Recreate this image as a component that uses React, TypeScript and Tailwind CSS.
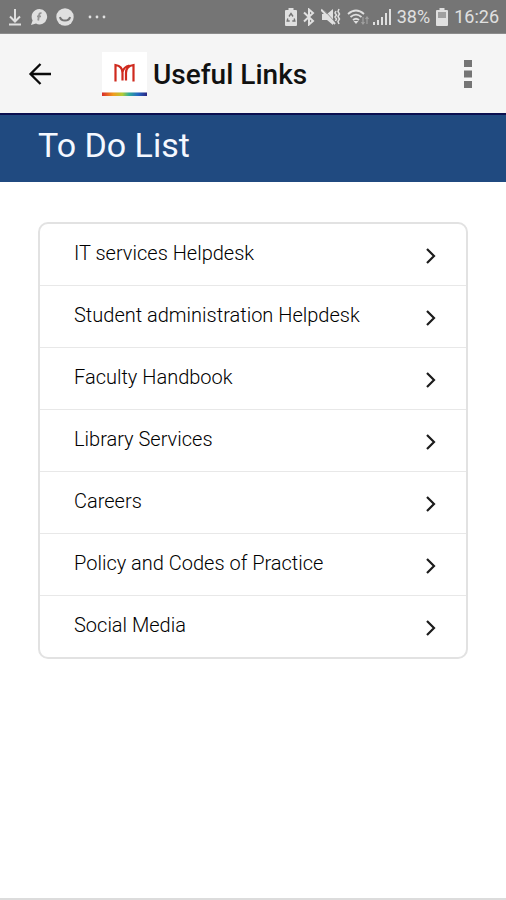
const links = [
  "IT services Helpdesk",
  "Student administration Helpdesk",
  "Faculty Handbook",
  "Library Services",
  "Careers",
  "Policy and Codes of Practice",
  "Social Media",
];

function StatusBar() {
  return (
    <div className="flex h-[34px] items-center justify-between border-b border-[#8c8c8c] bg-[#757575] pl-2 pr-[7px] text-[#e0e0e0]">
      <div className="flex items-center gap-2">
        <svg className="h-[18px] w-[14px]" viewBox="0 0 14 18" fill="none" stroke="currentColor" strokeWidth="2">
          <path d="M7 1v12M2 8.5l5 5 5-5M1 16.5h12" />
        </svg>
        <svg className="h-[18px] w-[18px]" viewBox="0 0 18 18">
          <path fill="currentColor" d="M9.5 1A7.7 7.7 0 1 1 6 15.6L1 17l1.600-4.400A7.800 7.800 0 0 1 9.500 1z" />
          <path fill="none" stroke="#959595" strokeWidth="1.800" d="M11.500 5.200c-2-.4-2.300.8-2.500 2.300l-.8 5M7 8.300h4" />
        </svg>
        <svg className="h-[18px] w-[18px]" viewBox="0 0 18 18">
          <circle cx="9" cy="9" r="8.700" fill="currentColor" />
          <path fill="none" stroke="#757575" strokeWidth="2" d="M4 9c1 4.800 9 4.800 10 0" />
        </svg>
        <svg className="ml-[6px] h-1 w-[18px]" viewBox="0 0 18 4" fill="currentColor">
          <circle cx="2" cy="2" r="1.400" />
          <circle cx="9" cy="2" r="1.400" />
          <circle cx="16" cy="2" r="1.400" />
        </svg>
      </div>
      <div className="flex items-center gap-[6px]">
        <svg className="h-[18px] w-3" viewBox="0 0 12 18">
          <path fill="currentColor" d="M3.500 2V0h5v2H11q1 0 1 1v14q0 1-1 1H1q-1 0-1-1V3q0-1 1-1z" />
          <path fill="none" stroke="#757575" strokeWidth="1.400" d="M4 8.500l2-3 2 3M2.800 10.500l-.6 2.500h2.500M9.200 10.500l.6 2.500H7.300" />
        </svg>
        <svg className="h-[18px] w-3" viewBox="0 0 12 18" fill="none" stroke="currentColor" strokeWidth="2">
          <path d="M1 4.500l9 8.500-4 3.500v-15l4 3.500-9 8.500" />
        </svg>
        <svg className="h-[18px] w-[20px]" viewBox="0 0 20 18">
          <path fill="currentColor" d="M1 6h5l6-5v16l-6-5H1z" />
          <path fill="none" stroke="#8a8a8a" strokeWidth="1" d="M3.500 2.500l10 11" />
          <path fill="none" stroke="currentColor" strokeWidth="2" d="M0 1.500L14 16" />
          <path fill="none" stroke="currentColor" strokeWidth="1.500" d="M15 3l-1 2 1.500 2L14 9l1.500 2-1 2M18 1l-1 2.500L18.500 6 17 8.500l1.500 2.500-1.500 2.500 1 2.500" />
        </svg>
        <div className="flex items-center gap-1">
          <svg className="h-[18px] w-[22px]" viewBox="0 0 22 18" fill="none" stroke="currentColor" strokeWidth="1.800">
            <path d="M1 6q8-7 16 0M3.500 9q5.500-4.800 11 0M6 12q3-2.600 6 0" />
            <path fill="currentColor" stroke="none" d="M6.500 13h5L9 16z" />
            <path opacity=".4" d="M16 9v7M14.500 14l1.500 2 1.500-2M20 16V9M18.500 11L20 9l1.500 2" strokeWidth="1.200" />
          </svg>
          <svg className="h-[18px] w-[18px]" viewBox="0 0 18 18" fill="currentColor">
            <path d="M0 14h2v3H0zM4 12h2v5H4zM8 9h2v8H8zM12 5h2v12h-2zM16 1h2v16h-2z" />
          </svg>
        </div>
        <span className="text-lg leading-none">38%</span>
        <svg className="h-[18px] w-3" viewBox="0 0 12 18">
          <path fill="currentColor" d="M3.500 2V0h5v2H11q1 0 1 1v14q0 1-1 1H1q-1 0-1-1V3q0-1 1-1z" />
          <path fill="#a0a0a0" d="M2 4h8v6H2z" />
        </svg>
        <span className="text-lg leading-none">16:26</span>
      </div>
    </div>
  );
}

function Logo() {
  return (
    <svg className="h-11 w-[45px]" viewBox="0 0 45 44">
      <defs>
        <linearGradient id="rainbow">
          <stop offset="0" stopColor="#d92b2b" />
          <stop offset=".25" stopColor="#f39a1e" />
          <stop offset=".45" stopColor="#b5cc33" />
          <stop offset=".6" stopColor="#2fae9a" />
          <stop offset=".8" stopColor="#2466c4" />
          <stop offset="1" stopColor="#2b2580" />
        </linearGradient>
      </defs>
      <path fill="#fff" d="M0 0h45v40H0z" />
      <path fill="none" stroke="#cf2a1e" strokeWidth="2.200" d="M13.500 29.500V13q7 1 7 8v7.500M24 28.500V21q0-7 7.500-8v16.500M20.500 20q1-5 7-6.500" />
      <path fill="url(#rainbow)" d="M0 40.500h45V44H0z" />
    </svg>
  );
}

function Header() {
  return (
    <header className="flex h-[79px] items-center bg-[#f5f5f5] pl-7 pr-6">
      <button type="button" aria-label="Back" className="flex h-6 w-6 items-center justify-center">
        <svg className="h-6 w-6" viewBox="0 0 24 24" fill="none" stroke="#0a0a0a" strokeWidth="2.300">
          <path d="M23 12H2M12.500 2L2.500 12l10 10" />
        </svg>
      </button>
      <div className="ml-[50px] flex items-center gap-[6px]">
        <Logo />
        <h1 className="pt-[2px] text-[28px] font-medium leading-8 text-[#111]">Useful Links</h1>
      </div>
      <button type="button" aria-label="More options" className="ml-auto flex h-8 w-7 items-center justify-center">
        <svg className="h-7 w-2" viewBox="0 0 8 28" fill="#757575">
          <path d="M0 0h8v7H0zM0 10.500h8v7H0zM0 21h8v7H0z" />
        </svg>
      </button>
    </header>
  );
}

export default function App() {
  return (
    <div className="flex min-h-screen flex-col border-b-2 border-[#dcdcdc] bg-white font-['Roboto',sans-serif]">
      <StatusBar />
      <Header />
      <div className="border-t-2 border-[#0b1050] bg-[#204a80] px-[38px] pb-[15px] pt-[9px]">
        <h2 className="text-[34px] leading-[43px] text-[#f5f8ff]">To Do List</h2>
      </div>
      <main className="px-[38px] py-10">
        <ul className="divide-y divide-[#e8e8e8] rounded-[10px] border-2 border-[#e2e2e2]">
          {links.map((label) => (
            <li key={label}>
              <a href="#" className="flex h-[61px] items-center justify-between pl-[34px] pr-[30px] text-black">
                <span className="pb-1 text-xl font-light">{label}</span>
                <svg className="mt-[2px] h-4 w-[10px]" viewBox="0 0 10 16" fill="none" stroke="#1c1c1c" strokeWidth="2.200">
                  <path d="M1 1l7 7-7 7" />
                </svg>
              </a>
            </li>
          ))}
        </ul>
      </main>
    </div>
  );
}
